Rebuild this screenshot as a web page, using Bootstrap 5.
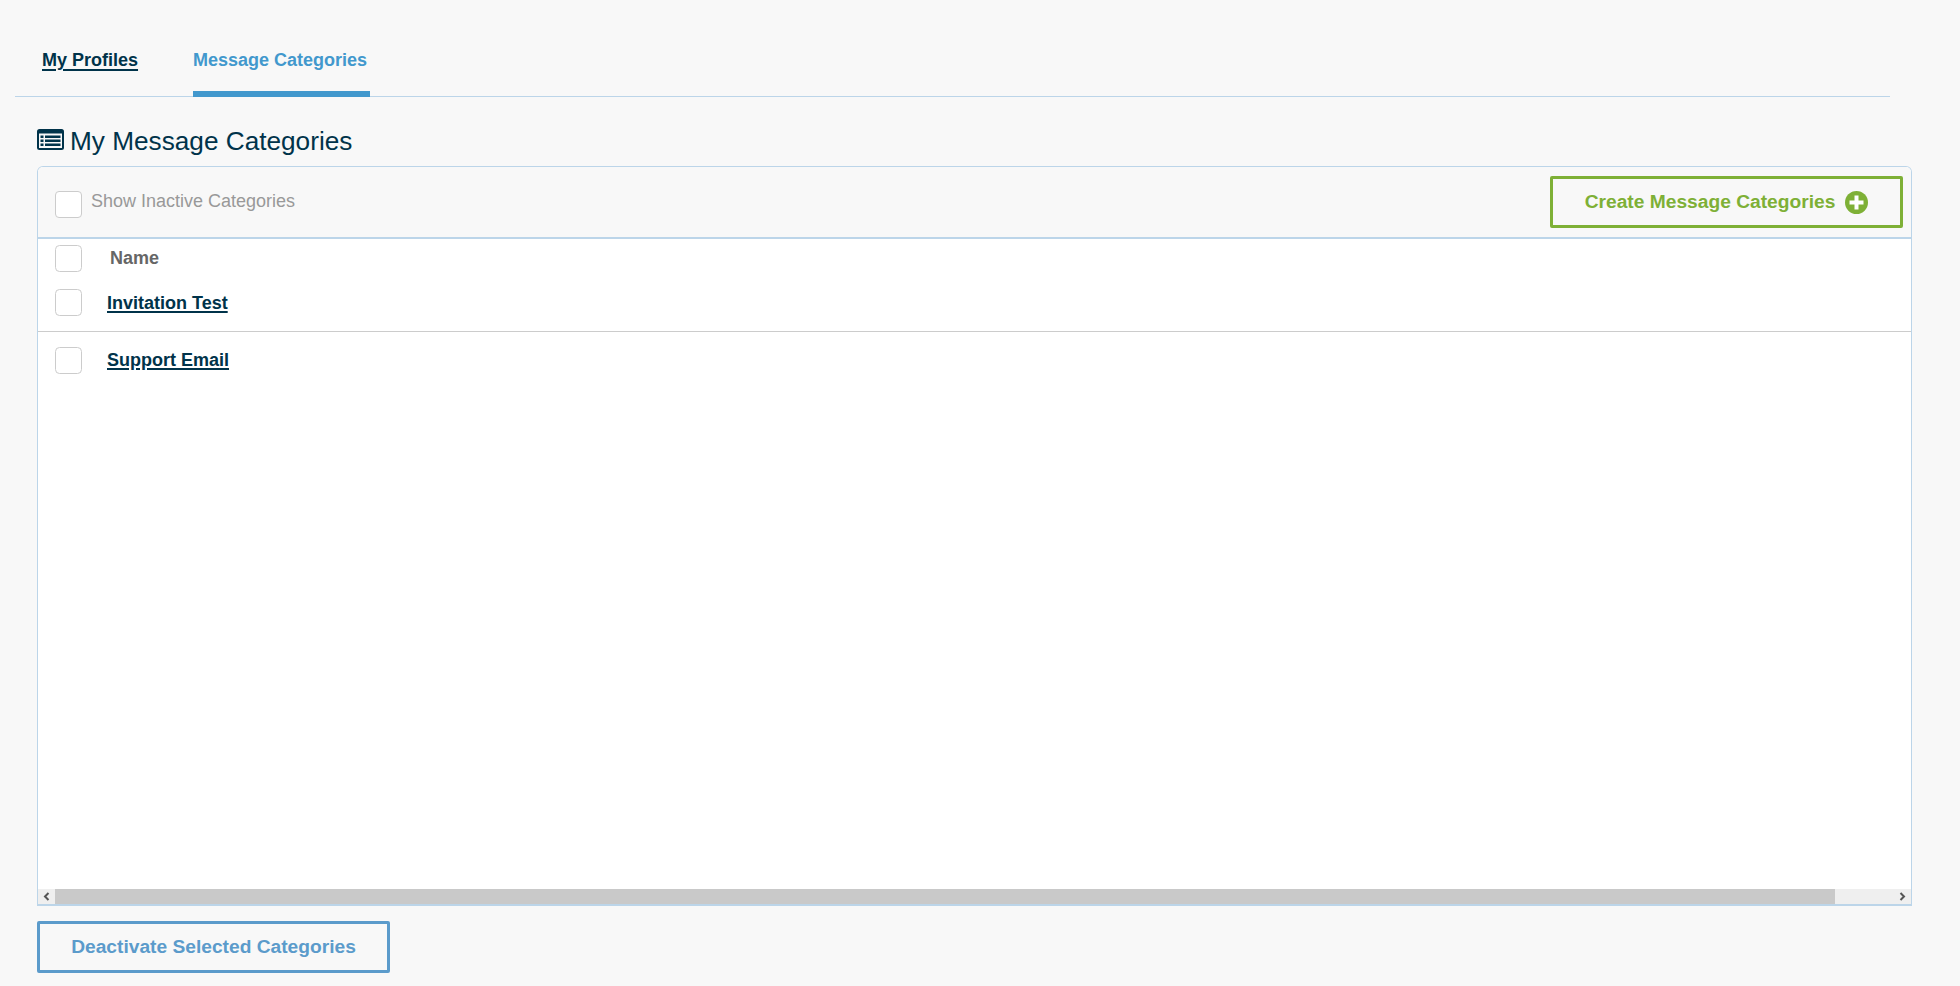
<!DOCTYPE html>
<html lang="en">
<head>
<meta charset="utf-8">
<title>My Message Categories</title>
<link rel="stylesheet" href="https://cdn.jsdelivr.net/npm/bootstrap@5.3.0/dist/css/bootstrap.min.css">
<style>
html,body{height:986px;overflow:hidden}
body{background:#f8f8f8;font-family:"Liberation Sans",Arial,sans-serif;color:#00334a;margin:0}
.page-tabs{margin:32px 0 0 15px;width:1875px;height:65px;border-bottom:1px solid #bcd5e9;padding-left:27px;gap:52px;flex-wrap:nowrap}
.page-tabs .nav-link{padding:15px 3px 0 0;height:65px;font-size:18px;font-weight:700;color:#00334a;text-decoration:underline;text-decoration-thickness:2px;text-underline-offset:3px;border-bottom:6px solid transparent;margin-bottom:-1px}
.page-tabs .nav-link.active{color:#4298cd;text-decoration:none;border-bottom-color:#4298cd}
.main-area{margin:0 0 0 37px;width:1875px}
.page-title{font-size:26.2px;font-weight:400;line-height:30px;margin:29px 0 0;height:40px;color:#00334a;gap:6px;align-items:flex-start}
.page-title svg{margin-top:3px;flex:none}
.cat-card{height:740px;border:1px solid #bcd5e9;border-bottom-width:2px;border-radius:6px 6px 0 0;background:#fff;overflow:hidden}
.cat-head{height:72px;background:#f8f8f8;border-bottom:2px solid #bcd5e9;padding:0 8px 0 17px;flex:none}
.box{width:27px;height:27px;border:1px solid #ccc;border-radius:3px;background:#fff;margin:0;flex:none;box-shadow:none}
.head-box{margin-top:5px}
.inactive-label{font-size:18px;color:#999;margin-left:9px;margin-bottom:1px}
.create-btn{width:353px;height:52px;border:3px solid #7eb036;border-radius:2px;color:#7eb036;font-size:19.2px;font-weight:700;background:transparent;gap:10px;padding:0}
.create-btn:hover{color:#7eb036;border-color:#7eb036}
.cat-body{flex:1 1 auto}
.name-row{padding:6px 0 0 17px;height:50px;font-size:18px;font-weight:700;color:#666}
.name-row span{margin-left:28px}
.data-row{padding-left:17px;font-size:18px;font-weight:700}
.data-row a{color:#00334a;margin-left:25px;text-decoration-thickness:2px;text-underline-offset:2px}
.row-a{height:43px;border-bottom:1px solid #ccc;align-items:flex-start}
.row-a a{margin-top:1px}
.row-b{padding-top:15px;align-items:flex-start}
.hscroll{height:15px;background:#efefef;flex:none}
.hscroll-thumb{width:1780px;background:#c9c9c9}
.hscroll-end{width:17px;flex:none}
.hscroll-gap{flex:1 1 auto}
.deact-btn{width:353px;height:52px;margin-top:15px;border:3px solid #5b9bcb;border-radius:2px;color:#5b9bcb;font-size:19.2px;font-weight:700;background:transparent;padding:1px 0 0}
.deact-btn:hover{color:#5b9bcb;border-color:#5b9bcb}
</style>
</head>
<body>
<ul class="nav page-tabs">
  <li class="nav-item"><a class="nav-link" href="#">My Profiles</a></li>
  <li class="nav-item"><a class="nav-link active" href="#">Message Categories</a></li>
</ul>
<div class="main-area">
  <h1 class="page-title d-flex">
    <svg width="27" height="21" viewBox="0 0 27 21"><rect width="27" height="21" rx="2.500" fill="#00334a"/><rect x="2" y="4.500" width="23" height="14.500" fill="#f8f8f8"/><g fill="#00334a"><rect x="3.500" y="6.500" width="3" height="2.500"/><rect x="3.500" y="10.500" width="3" height="2.500"/><rect x="3.500" y="14.500" width="3" height="2.500"/><rect x="8" y="6.500" width="15.500" height="2.500"/><rect x="8" y="10.500" width="15.500" height="2.500"/><rect x="8" y="14.500" width="15.500" height="2.500"/></g></svg>
    <span>My Message Categories</span>
  </h1>
  <div class="card cat-card d-flex flex-column">
    <div class="cat-head d-flex align-items-center justify-content-between">
      <div class="d-flex align-items-center">
        <input class="form-check-input box head-box" type="checkbox" aria-label="Show Inactive Categories">
        <span class="inactive-label">Show Inactive Categories</span>
      </div>
      <a href="#" class="btn create-btn d-flex align-items-center justify-content-center">
        <span>Create Message Categories</span>
        <svg width="23" height="23" viewBox="0 0 23 23"><circle cx="11.500" cy="11.500" r="11.500" fill="#7eb036"/><path d="M9.500 4.500h4v5H18.500v4h-5v5h-4v-5h-5v-4h5z" fill="#fff"/></svg>
      </a>
    </div>
    <div class="cat-body">
      <div class="name-row d-flex align-items-start"><input class="form-check-input box" type="checkbox" aria-label="Select all"><span>Name</span></div>
      <div class="data-row row-a d-flex"><input class="form-check-input box" type="checkbox" aria-label="Invitation Test"><a href="#">Invitation Test</a></div>
      <div class="data-row row-b d-flex"><input class="form-check-input box" type="checkbox" aria-label="Support Email"><a href="#">Support Email</a></div>
    </div>
    <div class="hscroll d-flex">
      <div class="hscroll-end d-flex align-items-center justify-content-center"><svg width="7" height="9" viewBox="0 0 7 9"><path d="M5.500 1 2 4.500 5.500 8" fill="none" stroke="#555" stroke-width="2"/></svg></div>
      <div class="hscroll-thumb"></div>
      <div class="hscroll-gap"></div>
      <div class="hscroll-end d-flex align-items-center justify-content-center"><svg width="7" height="9" viewBox="0 0 7 9"><path d="M1.500 1 5 4.500 1.500 8" fill="none" stroke="#555" stroke-width="2"/></svg></div>
    </div>
  </div>
  <a href="#" class="btn deact-btn d-flex align-items-center justify-content-center">Deactivate Selected Categories</a>
</div>
<script src="https://cdn.jsdelivr.net/npm/bootstrap@5.3.0/dist/js/bootstrap.bundle.min.js"></script>
</body>
</html>
